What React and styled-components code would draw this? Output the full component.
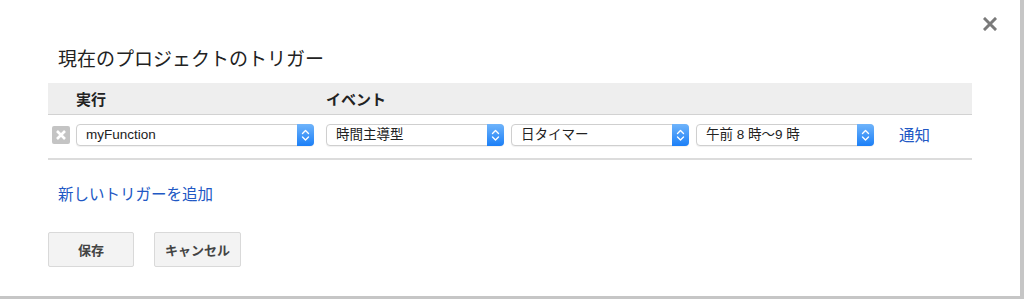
import React from "react"
import styled, { createGlobalStyle } from "styled-components"

const GlobalStyle = createGlobalStyle`
  html, body {
    margin: 0;
    padding: 0;
    background: #fff;
  }
  body {
    font-family: "Liberation Sans", "Noto Sans CJK JP", sans-serif;
    color: #222;
  }
`

const Dialog = styled.div`
  position: relative;
  width: 924px;
  height: 296px;
  padding: 0 48px;
  border-right: 4px solid #c6c6c6;
  border-bottom: 3px solid #c6c6c6;
  background: #fff;
`

const Close = styled.button`
  position: absolute;
  top: 17px;
  right: 23px;
  width: 14px;
  height: 14px;
  padding: 0;
  border: 0;
  background: none;
  cursor: pointer;
  svg {
    display: block;
  }
`

const Title = styled.h2`
  margin: 0 0 9px;
  padding: 46px 0 0 10px;
  font-size: 19px;
  line-height: 28px;
  font-weight: normal;
  color: #222;
`

const HeaderRow = styled.div`
  display: flex;
  align-items: center;
  height: 31px;
  padding-left: 28px;
  background: #eeeeee;
  border-bottom: 1px solid #d2d2d2;
`

const HeaderCell = styled.div`
  width: ${(p) => p.$width || "auto"};
  font-size: 15px;
  font-weight: bold;
  color: #222;
`

const Row = styled.div`
  display: flex;
  align-items: center;
  padding: 9px 0 12px 4px;
  border-bottom: 2px solid #dcdcdc;
`

const DeleteIcon = styled.span`
  display: flex;
  align-items: center;
  justify-content: center;
  width: 18px;
  height: 18px;
  margin-right: 6px;
  border-radius: 2px;
  background: #c4c4c4;
`

const SelectBox = styled.div`
  display: flex;
  align-items: stretch;
  box-sizing: border-box;
  width: ${(p) => p.$width}px;
  height: 22px;
  margin-right: ${(p) => p.$gap || 0}px;
  border: 1px solid #cfcfcf;
  border-radius: 4px;
  background: #fff;
  box-shadow: 0 1px 1px rgba(0, 0, 0, 0.06);
`

const SelectLabel = styled.span`
  flex: 1;
  padding-left: 9px;
  font-size: 13.5px;
  line-height: 20px;
  color: #222;
  white-space: nowrap;
  overflow: hidden;
`

const Stepper = styled.span`
  display: flex;
  align-items: center;
  justify-content: center;
  width: 17px;
  margin: -1px -1px -1px 0;
  border-radius: 0 4px 4px 0;
  background: linear-gradient(#6fb4fb, #1b7ff7);
`

const Link = styled.a`
  font-size: 15.5px;
  line-height: 21px;
  color: #2158c4;
  text-decoration: none;
  cursor: pointer;
`

const AddLine = styled.div`
  margin-top: 24px;
  padding-left: 10px;
`

const Buttons = styled.div`
  display: flex;
  gap: 20px;
  margin-top: 27px;
`

const Button = styled.button`
  box-sizing: border-box;
  width: ${(p) => p.$width}px;
  height: 35px;
  border: 1px solid #d9d9d9;
  border-radius: 2px;
  background: #f3f3f3;
  font-family: "Liberation Sans", "Noto Sans CJK JP", sans-serif;
  font-size: 13px;
  font-weight: bold;
  color: #444;
  cursor: pointer;
`

const Chevrons = () => (
  <svg width="17" height="22" viewBox="0 0 17 22">
    <path d="M5.5 9.5 L8.5 6.5 L11.5 9.5" fill="none" stroke="#fff" strokeWidth="1.4" strokeLinecap="round" strokeLinejoin="round" />
    <path d="M5.5 13 L8.5 16 L11.5 13" fill="none" stroke="#fff" strokeWidth="1.4" strokeLinecap="round" strokeLinejoin="round" />
  </svg>
)

const Select = ({ value, width, gap }) => (
  <SelectBox $width={width} $gap={gap}>
    <SelectLabel>{value}</SelectLabel>
    <Stepper>
      <Chevrons />
    </Stepper>
  </SelectBox>
)

const App = () => (
  <>
    <GlobalStyle />
    <Dialog>
      <Close aria-label="閉じる">
        <svg width="14" height="14" viewBox="0 0 14 14">
          <path d="M2 2 L12 12 M12 2 L2 12" stroke="#7a7a7a" strokeWidth="3" strokeLinecap="square" />
        </svg>
      </Close>
      <Title>現在のプロジェクトのトリガー</Title>
      <HeaderRow>
        <HeaderCell $width="250px">実行</HeaderCell>
        <HeaderCell>イベント</HeaderCell>
      </HeaderRow>
      <Row>
        <DeleteIcon>
          <svg width="12" height="12" viewBox="0 0 12 12">
            <path d="M2 2 L10 10 M10 2 L2 10" stroke="#fff" strokeWidth="2.6" />
          </svg>
        </DeleteIcon>
        <Select value="myFunction" width={238} gap={12} />
        <Select value="時間主導型" width={178} gap={7} />
        <Select value="日タイマー" width={178} gap={7} />
        <Select value="午前 8 時〜9 時" width={178} gap={25} />
        <Link>通知</Link>
      </Row>
      <AddLine>
        <Link>新しいトリガーを追加</Link>
      </AddLine>
      <Buttons>
        <Button $width={86}>保存</Button>
        <Button $width={87}>キャンセル</Button>
      </Buttons>
    </Dialog>
  </>
)

export default App
